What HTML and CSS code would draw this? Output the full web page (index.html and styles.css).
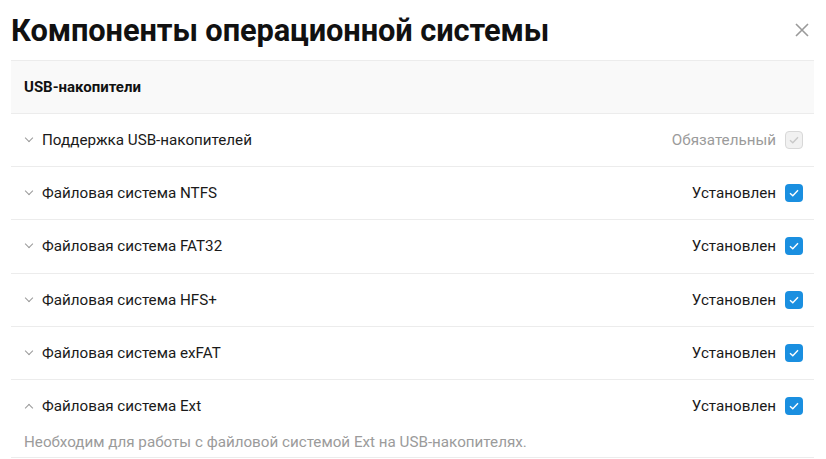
FILE: index.html
```html
<!DOCTYPE html>
<html lang="ru">
<head>
    <meta charset="UTF-8">
    <meta name="viewport" content="width=device-width, initial-scale=1.0">
    <title>Компоненты операционной системы</title>
    <link rel="stylesheet" href="styles.css">
</head>
<body>
    <div class="dialog">
        <div class="dialog-header">
            <h1>Компоненты операционной системы</h1>
            <button class="close-btn" aria-label="Закрыть">
                <svg width="14" height="14" viewBox="0 0 14 14"><path d="M1 1L13 13M13 1L1 13" stroke="#9a9a9a" stroke-width="1.6" fill="none"/></svg>
            </button>
        </div>

        <div class="section">
            <div class="section-title">USB-накопители</div>

            <div class="row">
                <div class="row-main">
                    <span class="chevron down"></span>
                    <span class="row-name">Поддержка USB-накопителей</span>
                    <span class="row-status muted">Обязательный</span>
                    <span class="check disabled">
                        <svg width="10" height="8" viewBox="0 0 10 8"><path d="M1 4.2L3.8 6.8L9 1.2" stroke="#c8c8c8" stroke-width="1.4" fill="none"/></svg>
                    </span>
                </div>
            </div>

            <div class="row">
                <div class="row-main">
                    <span class="chevron down"></span>
                    <span class="row-name">Файловая система NTFS</span>
                    <span class="row-status">Установлен</span>
                    <span class="check">
                        <svg width="10" height="8" viewBox="0 0 10 8"><path d="M1 4.2L3.8 6.8L9 1.2" stroke="#fff" stroke-width="1.4" fill="none"/></svg>
                    </span>
                </div>
            </div>

            <div class="row">
                <div class="row-main">
                    <span class="chevron down"></span>
                    <span class="row-name">Файловая система FAT32</span>
                    <span class="row-status">Установлен</span>
                    <span class="check">
                        <svg width="10" height="8" viewBox="0 0 10 8"><path d="M1 4.2L3.8 6.8L9 1.2" stroke="#fff" stroke-width="1.4" fill="none"/></svg>
                    </span>
                </div>
            </div>

            <div class="row">
                <div class="row-main">
                    <span class="chevron down"></span>
                    <span class="row-name">Файловая система HFS+</span>
                    <span class="row-status">Установлен</span>
                    <span class="check">
                        <svg width="10" height="8" viewBox="0 0 10 8"><path d="M1 4.2L3.8 6.8L9 1.2" stroke="#fff" stroke-width="1.4" fill="none"/></svg>
                    </span>
                </div>
            </div>

            <div class="row">
                <div class="row-main">
                    <span class="chevron down"></span>
                    <span class="row-name">Файловая система exFAT</span>
                    <span class="row-status">Установлен</span>
                    <span class="check">
                        <svg width="10" height="8" viewBox="0 0 10 8"><path d="M1 4.2L3.8 6.8L9 1.2" stroke="#fff" stroke-width="1.4" fill="none"/></svg>
                    </span>
                </div>
            </div>

            <div class="row open">
                <div class="row-main">
                    <span class="chevron up"></span>
                    <span class="row-name">Файловая система Ext</span>
                    <span class="row-status">Установлен</span>
                    <span class="check">
                        <svg width="10" height="8" viewBox="0 0 10 8"><path d="M1 4.2L3.8 6.8L9 1.2" stroke="#fff" stroke-width="1.4" fill="none"/></svg>
                    </span>
                </div>
                <p class="row-desc">Необходим для работы с файловой системой Ext на USB-накопителях.</p>
            </div>
        </div>
    </div>
</body>
</html>
```

FILE: styles.css
```css
body {
    margin: 0;
    padding: 0;
    font-family: Roboto, "Noto Sans", Arial, sans-serif;
    background-color: #fff;
    color: #1a1a1a;
}

.dialog {
    padding: 0 12px 0 11px;
}

.dialog-header {
    display: flex;
    align-items: center;
    justify-content: space-between;
    height: 60px;
}

.dialog-header h1 {
    margin: 0;
    font-size: 30.8px;
    font-weight: 700;
    color: #111;
    letter-spacing: -0.1px;
}

.close-btn {
    border: none;
    background: none;
    padding: 0;
    margin-right: 5px;
    cursor: pointer;
    display: flex;
}

.section {
    border-top: 1px solid #ececec;
}

.section-title {
    background-color: #f9f9f9;
    height: 52px;
    line-height: 52px;
    padding-left: 13px;
    font-size: 15px;
    font-weight: 700;
    color: #111;
    border-bottom: 1px solid #ececec;
}

.row {
    border-bottom: 1px solid #ececec;
}

.row-main {
    display: flex;
    align-items: center;
    height: 52.2px;
    padding: 0 11px 0 13px;
}

.chevron {
    width: 5px;
    height: 5px;
    border-right: 1.2px solid #9a9a9a;
    border-bottom: 1.2px solid #9a9a9a;
    margin: 0 10px 0 2px;
}

.chevron.down {
    transform: translateY(-2px) rotate(45deg);
}

.chevron.up {
    transform: translateY(2px) rotate(-135deg);
}

.row-name {
    flex: 1;
    font-size: 15.2px;
    color: #1a1a1a;
}

.row-status {
    font-size: 15.2px;
    color: #1a1a1a;
    margin-right: 9px;
}

.row-status.muted {
    color: #9b9b9b;
}

.check {
    width: 18px;
    height: 18px;
    border-radius: 4px;
    background-color: #1a8fe0;
    display: flex;
    align-items: center;
    justify-content: center;
    box-sizing: border-box;
}

.check.disabled {
    background-color: #f1f1f1;
    border: 1px solid #d8d8d8;
}

.row.open .row-main {
    height: 53px;
}

.row-desc {
    margin: 0;
    padding: 0 13px 0 13px;
    height: 24px;
    font-size: 15.2px;
    color: #9b9b9b;
}
```
